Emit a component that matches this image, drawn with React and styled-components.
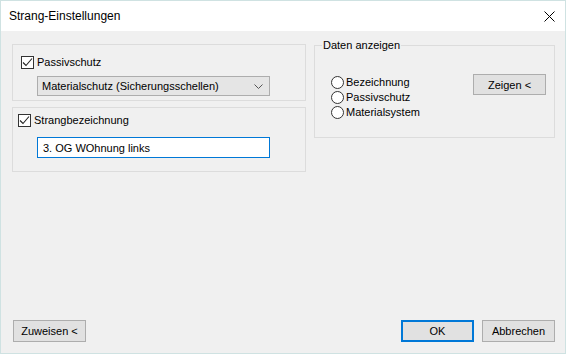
import React from "react";
import styled, { createGlobalStyle } from "styled-components";

const GlobalStyle = createGlobalStyle`
  html, body {
    margin: 0;
    padding: 0;
    background: #ffffff;
  }
  body {
    font-family: "Liberation Sans", Arial, sans-serif;
    font-size: 11px;
    color: #000000;
  }
`;

const Window = styled.div`
  box-sizing: border-box;
  width: 566px;
  height: 354px;
  border: 1px solid #cfe2e2;
  display: flex;
  flex-direction: column;
  background: #f0f0f0;
`;

const TitleBar = styled.div`
  height: 30px;
  background: #ffffff;
  display: flex;
  align-items: center;
  justify-content: space-between;
  padding: 0 10px 0 8px;
  font-size: 12px;
`;

const Body = styled.div`
  flex: 1;
  display: flex;
  flex-direction: column;
  padding: 13px 10px 11px 11px;
`;

const Main = styled.div`
  display: flex;
  gap: 8px;
  align-items: flex-start;
`;

const LeftCol = styled.div`
  width: 294px;
  display: flex;
  flex-direction: column;
  gap: 6px;
`;

const Group = styled.div`
  box-sizing: border-box;
  height: ${(p) => p.$height}px;
  border: 1px solid #dcdcdc;
  padding: ${(p) => p.$padTop}px 0 0 ${(p) => p.$padLeft}px;
`;

const CheckRow = styled.label`
  display: flex;
  align-items: center;
  gap: 3px;
  height: 13px;
  line-height: 13px;
`;

const Box = styled.span`
  box-sizing: border-box;
  width: 13px;
  height: 13px;
  border: 1px solid #333333;
  background: #ffffff;
  display: flex;
  align-items: center;
  justify-content: center;
`;

const Select = styled.div`
  box-sizing: border-box;
  width: 233px;
  height: 20px;
  margin: ${(p) => p.$top}px 0 0 ${(p) => p.$left}px;
  background: #e5e5e5;
  border: 1px solid #adadad;
  display: flex;
  align-items: center;
  justify-content: space-between;
  padding: 0 6px 0 4px;
`;

const TextBox = styled.div`
  box-sizing: border-box;
  width: 233px;
  height: 21px;
  margin: ${(p) => p.$top}px 0 0 ${(p) => p.$left}px;
  background: #ffffff;
  border: 1px solid #0078d7;
  display: flex;
  align-items: center;
  padding-left: 5px;
`;

const Fieldset = styled.div`
  position: relative;
  box-sizing: border-box;
  flex: 1;
  height: 93px;
  margin-top: 1px;
  border: 1px solid #dcdcdc;
  display: flex;
  justify-content: space-between;
  align-items: flex-start;
  padding: 28px 8px 0 16px;
`;

const Legend = styled.span`
  position: absolute;
  left: 7px;
  top: -8px;
  padding: 0 1px;
  background: #f0f0f0;
  line-height: 15px;
`;

const RadioList = styled.div`
  display: flex;
  flex-direction: column;
  margin-top: 1px;
`;

const RadioRow = styled.label`
  display: flex;
  align-items: center;
  gap: 2px;
  height: 15px;
  line-height: 15px;
`;

const Circle = styled.span`
  box-sizing: border-box;
  width: 13px;
  height: 13px;
  border: 1px solid #333333;
  border-radius: 50%;
  background: #ffffff;
`;

const Button = styled.button`
  box-sizing: border-box;
  width: 73px;
  height: ${(p) => (p.$tall ? 21 : 22)}px;
  margin: 0;
  padding: 0;
  font-family: inherit;
  font-size: 11px;
  color: #000000;
  background: #e1e1e1;
  border: ${(p) => (p.$primary ? "2px solid #0078d7" : "1px solid #adadad")};
  border-radius: 0;
`;

const Footer = styled.div`
  margin-top: auto;
  display: flex;
  align-items: center;
  padding-left: 1px;
`;

const Spacer = styled.div`
  flex: 1;
`;

const FooterRight = styled.div`
  display: flex;
  gap: 8px;
`;

const Check = () => (
  <Box>
    <svg width="11" height="11" viewBox="0 0 11 11">
      <path d="M1 5.5 L4 8.5 L10 1.5" fill="none" stroke="#222" strokeWidth="1.1" />
    </svg>
  </Box>
);

const Radio = ({ label }) => (
  <RadioRow>
    <Circle />
    {label}
  </RadioRow>
);

export default function App() {
  return (
    <>
      <GlobalStyle />
      <Window>
        <TitleBar>
          <span>Strang-Einstellungen</span>
          <svg width="11" height="11" viewBox="0 0 11 11">
            <path d="M0.5 0.5 L10.5 10.5 M10.5 0.5 L0.5 10.5" stroke="#000" strokeWidth="1" />
          </svg>
        </TitleBar>
        <Body>
          <Main>
            <LeftCol>
              <Group $height={57} $padTop={11} $padLeft={8}>
                <CheckRow>
                  <Check />
                  Passivschutz
                </CheckRow>
                <Select $top={7} $left={16}>
                  <span>Materialschutz (Sicherungsschellen)</span>
                  <svg width="9" height="5" viewBox="0 0 9 5">
                    <path d="M0.5 0.5 L4.5 4.5 L8.5 0.5" fill="none" stroke="#555" strokeWidth="1" />
                  </svg>
                </Select>
              </Group>
              <Group $height={65} $padTop={6} $padLeft={5}>
                <CheckRow>
                  <Check />
                  Strangbezeichnung
                </CheckRow>
                <TextBox $top={10} $left={19}>3. OG WOhnung links</TextBox>
              </Group>
            </LeftCol>
            <Fieldset>
              <Legend>Daten anzeigen</Legend>
              <RadioList>
                <Radio label="Bezeichnung" />
                <Radio label="Passivschutz" />
                <Radio label="Materialsystem" />
              </RadioList>
              <Button $tall>Zeigen &lt;</Button>
            </Fieldset>
          </Main>
          <Footer>
            <Button>Zuweisen &lt;</Button>
            <Spacer />
            <FooterRight>
              <Button $primary>OK</Button>
              <Button>Abbrechen</Button>
            </FooterRight>
          </Footer>
        </Body>
      </Window>
    </>
  );
}
